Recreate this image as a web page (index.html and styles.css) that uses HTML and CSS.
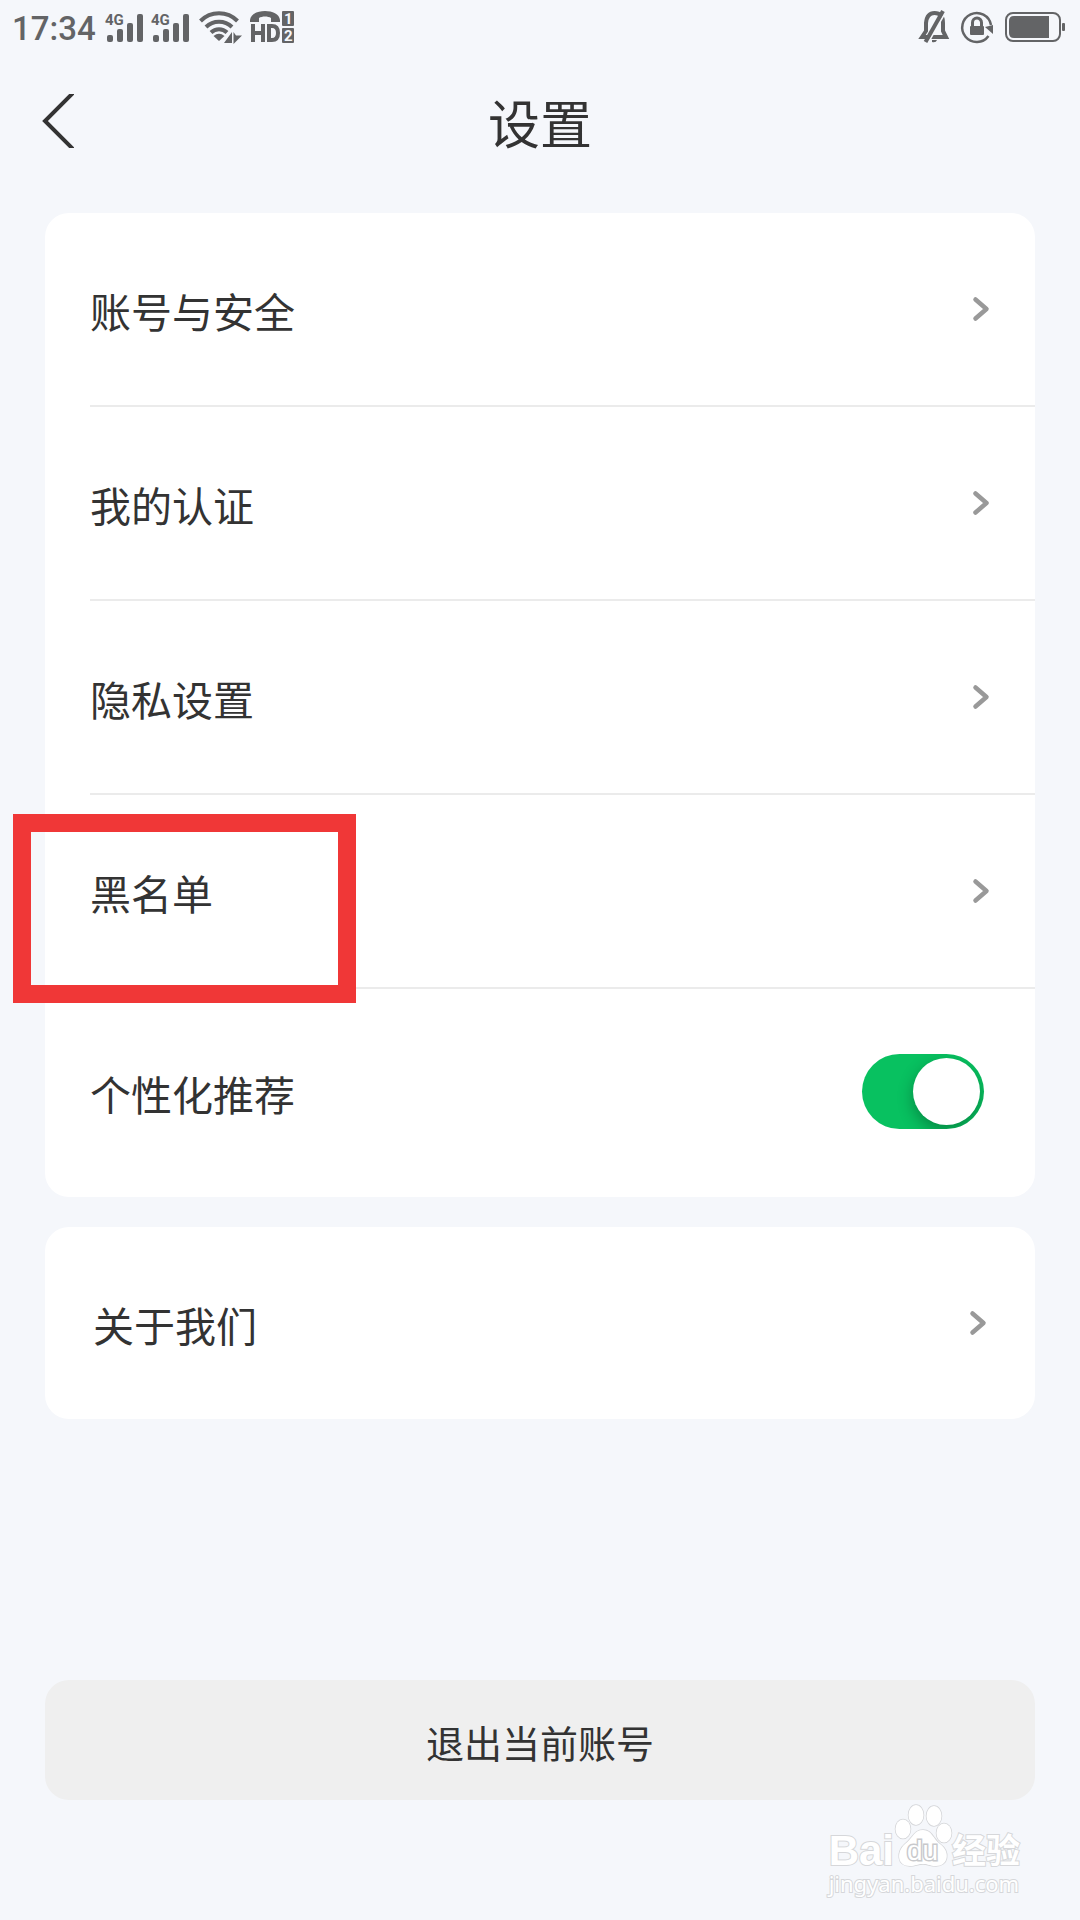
FILE: index.html
```html
<!DOCTYPE html>
<html lang="zh-CN">
<head>
<meta charset="utf-8">
<meta name="viewport" content="width=device-width, initial-scale=1">
<title>设置</title>
<link rel="stylesheet" href="styles.css">
</head>
<body>
<svg width="0" height="0" class="defs" aria-hidden="true">
  <symbol id="chevron" viewBox="0 0 18 28"><path d="M3.500 4.500 L14.500 14 L3.500 23.500" fill="none" stroke="#999" stroke-width="4.500" stroke-linecap="round" stroke-linejoin="round"/></symbol>
  <symbol id="bars" viewBox="0 0 38 32">
    <rect x="2" y="24" width="6" height="7" rx="2"/><rect x="12" y="18" width="6" height="13" rx="2"/><rect x="22" y="12" width="6" height="19" rx="2"/><rect x="32" y="3" width="6" height="28" rx="2"/>
  </symbol>
</svg>
<div class="screen">
  <div class="status">
    <div class="status-left">
      <span class="time">17:34</span>
      <svg class="signal" viewBox="0 0 38 32"><text x="0" y="14" class="signal-label">4G</text><use href="#bars"/></svg>
      <svg class="signal" viewBox="0 0 38 32"><text x="0" y="14" class="signal-label">4G</text><use href="#bars"/></svg>
      <svg class="wifi" viewBox="0 0 44 32">
        <g fill="none" stroke="currentColor" stroke-width="4">
          <path d="M1.500 10 A26 26 0 0 1 38.500 10"/><path d="M7 16 A18.500 18.500 0 0 1 33 16"/><path d="M12 21.500 A11.500 11.500 0 0 1 28 21.500"/>
        </g>
        <path d="M14.500 25 Q20 20.500 25.500 25 L20 30Z"/>
        <path d="M33 21 V32 H25 Z M34.500 21 V33 L43 24.500 H37Z"/>
      </svg>
      <svg class="hd" viewBox="0 0 45 32">
        <path d="M0 9 C1 -3 29 -3 30 9 V11 H21 V7 C18 5 12 5 9 7 V11 H0Z"/>
        <path d="M3 13 V31 M13 13 V31 M3 22 H13 M19 15 V29 H22 Q28 29 28 22 Q28 15 22 15Z" fill="none" stroke="currentColor" stroke-width="4"/>
        <rect x="32" y="0" width="12" height="15" rx="1"/><rect x="32" y="17" width="12" height="15" rx="1"/>
        <text x="34" y="13" class="sim">1</text><text x="34" y="30" class="sim">2</text>
      </svg>
    </div>
    <div class="status-right">
      <svg class="bell" viewBox="0 0 30 34">
        <path d="M3 27 L7 21 V13 Q8 3 15.500 3 Q24 3 24 13 V21 L27 27Z" fill="none" stroke="currentColor" stroke-width="4"/>
        <path d="M13 30 H18 Q17 33 13 32Z"/>
        <path d="M26.500 2 L10 31" stroke="#f5f7fb" stroke-width="2"/><path d="M24 1 L6.500 32" stroke="currentColor" stroke-width="4"/>
      </svg>
      <svg class="lock" viewBox="0 0 32 34">
        <path d="M27.500 26 A14.500 14.500 0 1 1 30 15" fill="none" stroke="currentColor" stroke-width="2.500"/>
        <path d="M24 17 L32 15 V24Z"/><rect x="9" y="16" width="14" height="9" rx="1"/>
        <path d="M11.500 17 V12.500 a4.500 4.500 0 0 1 9 0 V17" fill="none" stroke="currentColor" stroke-width="3"/>
      </svg>
      <svg class="battery" viewBox="0 0 60 32">
        <rect x="1" y="2" width="54" height="28" rx="7" fill="none" stroke="currentColor" stroke-width="2"/>
        <path d="M44 5 V27 H9 Q4 27 4 22 V10 Q4 5 9 5Z"/><rect x="57" y="12" width="3" height="8" rx="1"/>
      </svg>
    </div>
  </div>

  <header class="header">
    <button class="back" type="button" aria-label="返回"><svg viewBox="0 0 34 54"><path d="M33 -1 L5 27 L33 55" fill="none" stroke="#333" stroke-width="4"/></svg></button>
    <h1>设置</h1>
  </header>

  <main class="content">
    <div class="card">
      <a class="row" href="#"><span>账号与安全</span><svg class="chevron"><use href="#chevron"/></svg></a>
      <a class="row" href="#"><span>我的认证</span><svg class="chevron"><use href="#chevron"/></svg></a>
      <a class="row" href="#"><span>隐私设置</span><svg class="chevron"><use href="#chevron"/></svg></a>
      <a class="row marked" href="#"><span>黑名单</span><svg class="chevron"><use href="#chevron"/></svg></a>
      <div class="row row-toggle"><label for="personal">个性化推荐</label><input class="toggle" id="personal" type="checkbox" role="switch" checked></div>
    </div>
    <div class="card card-about">
      <a class="row" href="#"><span>关于我们</span><svg class="chevron"><use href="#chevron"/></svg></a>
    </div>
    <button class="logout" type="button"><span>退出当前账号</span></button>
  </main>

  <div class="watermark">
    <div class="brand">
      <span class="bai">Bai</span>
      <svg class="paw" viewBox="0 0 58 64">
        <g fill="#fff" stroke="#d4d5d8" stroke-width="1.500">
          <ellipse cx="9" cy="25" rx="7.500" ry="9.500"/><ellipse cx="22" cy="11" rx="7.500" ry="10"/><ellipse cx="40" cy="12" rx="7.500" ry="10"/><ellipse cx="50" cy="29" rx="7.500" ry="9.500"/>
          <path d="M29 26 C38 26 39 35 46 40 C57 48 54 62 42 62 C35 62 35 60 29 60 C23 60 22 62 16 62 C3 62 2 48 11 40 C19 34 20 26 29 26Z"/>
        </g>
        <text x="13" y="56" class="du">du</text>
      </svg>
      <span class="jingyan">经验</span>
    </div>
    <div class="url">jingyan.baidu.com</div>
  </div>
</div>
</body>
</html>
```
FILE: styles.css
```css
*, *::before, *::after { box-sizing: border-box; }

body {
  margin: 0;
  background: #f5f7fb;
  color: #333;
  font-family: "Noto Sans CJK SC", sans-serif;
}

.defs { position: absolute; }
svg { display: block; fill: currentColor; overflow: visible; }

.screen {
  position: relative;
  display: flex;
  flex-direction: column;
  min-height: 100vh;
}

/* Status bar */
.status {
  display: flex;
  justify-content: space-between;
  align-items: center;
  height: 54px;
  padding: 0 15px 0 12px;
  color: #636466;
}
.status-left, .status-right { display: flex; align-items: center; }
.status-left { gap: 8px; }
.status-right { gap: 12px; }
.time {
  margin-right: 1px;
  padding-top: 3px;
  font: 500 33px/54px Roboto, sans-serif;
}
.signal { width: 38px; height: 32px; }
.signal-label { font: 700 15px Roboto, sans-serif; }
.wifi { width: 44px; height: 32px; margin-left: 2px; }
.hd { width: 45px; height: 32px; margin-left: -1px; }
.sim { font: 700 15px Roboto, sans-serif; fill: #f5f7fb; }
.bell { width: 30px; height: 34px; }
.lock { width: 32px; height: 34px; }
.battery { width: 60px; height: 32px; }

/* Title bar */
.header {
  display: grid;
  grid-template-columns: 1fr auto 1fr;
  align-items: center;
  height: 134px;
  margin-bottom: 25px;
  padding: 0 40px;
}
.back {
  justify-self: start;
  width: 34px;
  height: 54px;
  padding: 0;
  border: 0;
  background: none;
}
.back svg { width: 34px; height: 54px; overflow: hidden; }
h1 {
  margin: 0;
  padding-top: 2px;
  font-size: 52px;
  line-height: 76px;
  font-weight: 400;
}

/* Settings list */
.content {
  display: flex;
  flex: 1;
  flex-direction: column;
  gap: 30px;
  padding: 0 45px 120px;
}
.card {
  border-radius: 24px;
  background: #fff;
}
.row {
  position: relative;
  display: flex;
  align-items: center;
  justify-content: space-between;
  height: 194px;
  margin-left: 45px;
  padding-right: 45px;
  border-bottom: 2px solid #ebebeb;
  color: inherit;
  font-size: 41px;
  line-height: 60px;
  text-decoration: none;
}
.row span, .row label { padding-top: 2px; }
.row:last-child { border-bottom: 0; }
.row-toggle { height: 208px; padding: 0 51px 3px 0; }
.card-about .row { height: 192px; margin-left: 48px; padding-right: 48px; }
.chevron { width: 18px; height: 28px; }

.marked::after {
  content: "";
  position: absolute;
  top: 19px;
  left: -77px;
  width: 343px;
  height: 189px;
  border: 18px solid #f03737;
}

.toggle {
  appearance: none;
  width: 122px;
  height: 75px;
  margin: 0;
  padding: 4px;
  border-radius: 38px;
  background: #08c160;
  overflow: hidden;
}
.toggle::before {
  content: "";
  display: block;
  width: 67px;
  height: 67px;
  margin-left: auto;
  border-radius: 50%;
  background: #fff;
  box-shadow: 0 6px 16px rgba(0, 0, 0, .3);
}

.logout {
  height: 120px;
  margin-top: auto;
  border: 0;
  border-radius: 24px;
  background: #efefef;
  color: inherit;
  font: 38px/56px "Noto Sans CJK SC", sans-serif;
}
.logout span { display: block; padding-top: 3px; }

/* Corner mark */
.watermark {
  position: absolute;
  right: 60px;
  bottom: 22px;
  color: #fff;
  -webkit-text-stroke: 2px #d6d7da;
  paint-order: stroke fill;
}
.brand { display: flex; align-items: flex-end; height: 62px; }
.bai { font: 700 42px/34px "Liberation Sans", sans-serif; }
.paw { width: 58px; height: 64px; }
.du { font: 28px "Liberation Sans", sans-serif; fill: #fff; stroke: #c8c9cc; stroke-width: 3px; }
.jingyan { font: 700 34px/38px "Noto Sans CJK SC", sans-serif; }
.url { font: 22px/30px "Noto Sans", sans-serif; }
```
